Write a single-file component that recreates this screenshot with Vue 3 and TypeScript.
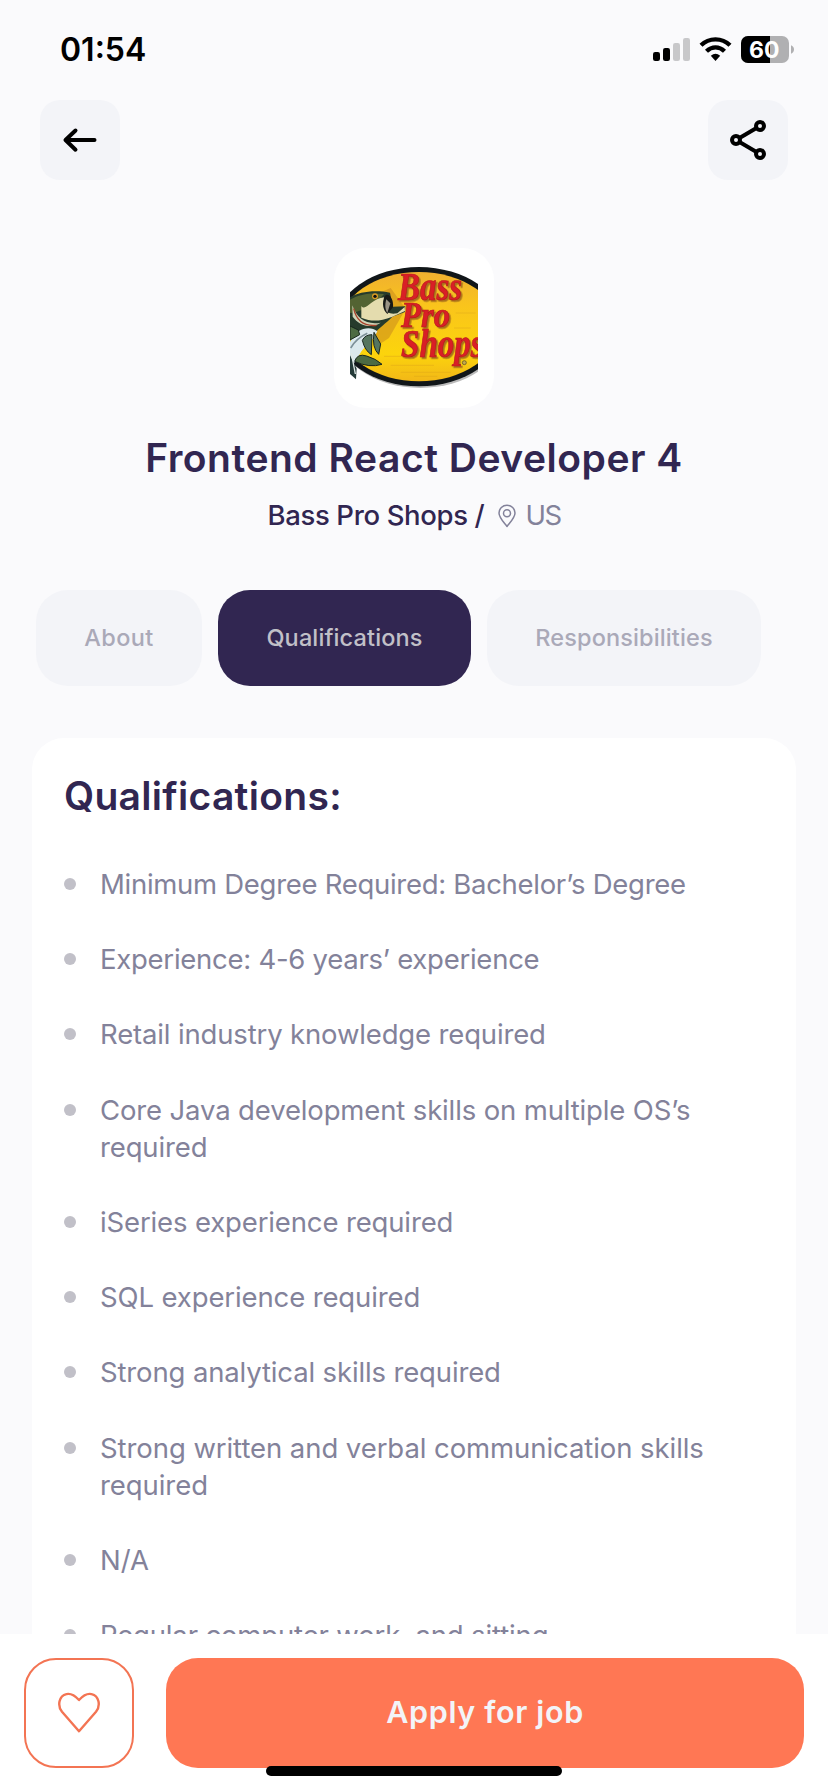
<script setup lang="ts">
interface Tab {
  label: string
  key: string
}

interface Qualification {
  text: string
  tracking: number
}

const active = 'qualifications'

const tabs: Tab[] = [
  { label: 'About', key: 'about' },
  { label: 'Qualifications', key: 'qualifications' },
  { label: 'Responsibilities', key: 'responsibilities' },
]

const qualifications: Qualification[] = [
  { text: 'Minimum Degree Required: Bachelor’s Degree', tracking: -0.29 },
  { text: 'Experience: 4-6 years’ experience', tracking: -0.26 },
  { text: 'Retail industry knowledge required', tracking: -0.15 },
  { text: 'Core Java development skills on multiple OS’s required', tracking: -0.14 },
  { text: 'iSeries experience required', tracking: -0.14 },
  { text: 'SQL experience required', tracking: -0.12 },
  { text: 'Strong analytical skills required', tracking: -0.14 },
  { text: 'Strong written and verbal communication skills required', tracking: -0.07 },
  { text: 'N/A', tracking: 0 },
  { text: 'Regular computer work, and sitting', tracking: -0.15 },
]
</script>

<template>
  <div class="screen">
    <div class="status">
      <span class="time">01:54</span>
      <svg class="indicators" width="144" height="30" viewBox="0 0 144 30">
        <rect x="0" y="17" width="7" height="9" rx="2.2" />
        <rect x="10" y="13" width="7" height="13" rx="2.2" />
        <rect x="20" y="8" width="7" height="18" rx="2.2" fill="#c8c8ca" />
        <rect x="30" y="3" width="7" height="23" rx="2.2" fill="#c8c8ca" />
        <g fill="none" stroke="#000" stroke-width="4.3">
          <path d="M48 10.3 C56 2.3 69 2.3 77 10.3" />
          <path d="M53.5 16.2 C58.8 11 66.2 11 71.5 16.2" />
        </g>
        <path d="M57.8 20.8 Q62.5 16.8 67.2 20.8 L62.5 26 Z" />
        <rect x="88" y="1" width="48" height="27" rx="7" fill="#b0b0b2" />
        <path d="M95 1 H117 V28 H95 A7 7 0 0 1 88 21 V8 A7 7 0 0 1 95 1 Z" />
        <path d="M138 10.3 C142 11.5 142 17.5 138 18.7 Z" fill="#b0b0b2" />
        <text x="111.3" y="23" class="battery">60</text>
      </svg>
    </div>

    <header class="nav">
      <button class="square" aria-label="Back">
        <svg width="80" height="80" viewBox="0 0 80 80" fill="none" stroke="#000" stroke-width="4" stroke-linecap="round" stroke-linejoin="round">
          <path d="M35.5 30.5 L25.5 40 L35.5 49.7 M26 40 H54.5" />
        </svg>
      </button>
      <button class="square" aria-label="Share">
        <svg width="80" height="80" viewBox="0 0 80 80" fill="none" stroke="#000" stroke-width="4">
          <circle cx="28" cy="40" r="4" />
          <circle cx="52" cy="26" r="4" />
          <circle cx="52" cy="54" r="4" />
          <path d="M31.5 38 L48.5 28 M31.5 42 L48.5 52" />
        </svg>
      </button>
    </header>

    <main class="content">
      <div class="logo">
        <svg width="128" height="128" viewBox="78 78 384 384">
          <defs>
            <linearGradient id="gold" x1="0" y1="0" x2="0" y2="1">
              <stop offset="0" stop-color="#f0b030" />
              <stop offset="0.3" stop-color="#f9c41c" />
              <stop offset="0.75" stop-color="#fcd40c" />
              <stop offset="1" stop-color="#f2b718" />
            </linearGradient>
          </defs>
          <ellipse cx="289" cy="271" rx="253" ry="179" fill="#bbb" />
          <ellipse cx="285" cy="266" rx="253" ry="179" fill="#111619" />
          <ellipse cx="285" cy="266" rx="238" ry="164" fill="url(#gold)" />
          <path d="M200 150 L245 212 L195 300 L150 330 L130 180 Z" fill="#c98a1d" opacity=".55" />
          <g fill="none" stroke="#dfa51a" stroke-width="2" opacity=".7">
            <path d="M180 355 H240 M200 382 H330 M230 403 H380 M390 270 H440 M395 225 H455 M270 415 H340" />
          </g>
          <!-- head -->
          <path d="M78 240 V178 C105 162 150 155 198 164 L206 206 L244 205 L243 222 L205 236 C186 256 164 270 150 288 L78 300 Z" fill="#263b2c" />
          <path d="M78 185 C110 166 145 164 180 168 L150 200 C120 210 100 225 78 225 Z" fill="#536332" />
          <path d="M112 204 C126 222 140 182 181 178 C176 210 180 232 220 226 L242 207 L243 219 L205 236 C165 250 145 252 112 239 Z" fill="#e4dcae" />
          <path d="M181 176 C191 160 210 180 207 208 L190 228 C176 215 174 195 181 176 Z" fill="#171a17" />
          <path d="M187 184 C181 205 185 218 190 225 L199 196 Z" fill="#9a9485" />
          <path d="M85 202 C98 242 128 262 170 254 C142 273 106 264 86 236 Z" fill="#cfd4b8" />
          <path d="M89 212 C98 250 122 266 158 262" fill="none" stroke="#a8442c" stroke-width="4" />
          <!-- belly, fins and tail -->
          <path d="M78 312 C96 270 138 262 160 280 C150 308 118 325 106 351 L92 372 L78 400 Z" fill="#dbe9ed" />
          <path d="M80 330 C92 310 108 296 130 286" fill="none" stroke="#7d9198" stroke-width="5" />
          <path d="M115 307 Q123 290 144 290 L142 350 Q122 337 115 307 Z M150 283 L170 318 L164 349 Q143 329 150 283 Z" fill="#55755f" stroke="#1a2921" stroke-width="3" />
          <path d="M92 370 Q100 345 128 354 Q156 362 174 379 Q136 391 92 370 Z M78 264 L103 276 L107 290 L78 306 Z" fill="#4d6b43" stroke="#18271d" stroke-width="3" />
          <path d="M78 352 L98 392 L96 424 L78 408 Z" fill="#253b39" />
          <path d="M82 345 L94 408" stroke="#e0e9e6" stroke-width="4" />
          <circle cx="153" cy="175" r="9" fill="#d99b22" />
          <circle cx="153" cy="175" r="5" fill="#111" />
          <g class="wordmark">
            <text x="222" y="185" font-size="117" textLength="192" lengthAdjust="spacingAndGlyphs">Bass</text>
            <text x="231" y="267" font-size="109" textLength="147" lengthAdjust="spacingAndGlyphs">Pro</text>
            <text x="231" y="356" font-size="122" textLength="248" lengthAdjust="spacingAndGlyphs">Shops</text>
          </g>
          <circle cx="421" cy="374" r="6" fill="#c6a94c" stroke="#4d4526" stroke-width="2" />
        </svg>
      </div>

      <h1 class="title">Frontend React Developer 4</h1>
      <div class="company">
        <span class="name">Bass Pro Shops /</span>
        <svg class="pin" width="20" height="24" viewBox="0 0 20 24" fill="none" stroke="#83829a" stroke-width="1.5">
          <path d="M10 22.5 C7.2 18.7 2 13.7 2 9 A8 7.8 0 0 1 18 9 C18 13.7 12.8 18.7 10 22.5 Z" stroke-linejoin="round" />
          <circle cx="10" cy="9.2" r="3.5" />
        </svg>
        <span class="place">US</span>
      </div>

      <nav class="tabs">
        <button v-for="tab in tabs" :key="tab.key" class="tab" :class="[tab.key, { active: tab.key === active }]">
          <span>{{ tab.label }}</span>
        </button>
      </nav>

      <section class="card">
        <h2 class="heading">Qualifications:</h2>
        <ul class="list">
          <li v-for="item in qualifications" :key="item.text" class="item">
            <i class="dot"></i>
            <span class="text"><span :style="{ letterSpacing: item.tracking + 'px' }">{{ item.text }}</span></span>
          </li>
        </ul>
      </section>
    </main>

    <footer class="footer">
      <button class="like" aria-label="Save job">
        <svg width="44" height="42" viewBox="0 0 44 42" fill="none" stroke="#f37453" stroke-width="2.4" stroke-linejoin="round">
          <path d="M22 39.3 L5 19.8 C0.2 13.8 1.8 3.8 9.5 2.1 C14.4 1 18.5 4.2 22 8 C25.5 4.2 29.6 1 34.5 2.1 C42.2 3.8 43.8 13.8 39 19.8 Z" />
        </svg>
      </button>
      <button class="apply"><span>Apply for job</span></button>
      <div class="home"></div>
    </footer>
  </div>
</template>

<style>
body {
  margin: 0;
  background: #fafafc;
}
</style>

<style scoped>
.screen {
  width: 828px;
  height: 1792px;
  display: flex;
  flex-direction: column;
  overflow: hidden;
  background: #fafafc;
  font-family: Inter, "Liberation Sans", sans-serif;
  color: #312651;
}

button {
  border: 0;
  padding: 0;
  margin: 0;
  font: inherit;
}

.status {
  display: flex;
  justify-content: space-between;
  height: 65px;
  padding: 35px 34px 0 60px;
  flex: none;
}

.time {
  font-size: 32px;
  line-height: 30px;
  font-weight: 600;
  color: #000;
}

.indicators {
  display: block;
  margin-right: -3px;
}

.battery {
  font: 700 23px Inter, sans-serif;
  fill: #fff;
  text-anchor: middle;
}

.nav {
  display: flex;
  justify-content: space-between;
  padding: 0 40px;
  flex: none;
}

.square {
  width: 80px;
  height: 80px;
  border-radius: 20px;
  background: #f3f4f8;
}

.square svg {
  display: block;
}

.content {
  flex: 1;
  min-height: 0;
  overflow: hidden;
  display: flex;
  flex-direction: column;
  padding-top: 68px;
}

.logo {
  width: 160px;
  height: 160px;
  box-sizing: border-box;
  padding: 16px;
  border-radius: 32px;
  background: #fff;
  align-self: center;
  flex: none;
}

.logo svg {
  display: block;
}

.wordmark {
  font-family: "Liberation Serif", serif;
  font-weight: 700;
  font-style: italic;
  fill: #d91f26;
  stroke: #b5181e;
  stroke-width: 2;
  filter: drop-shadow(5px 5px 0 #a8701a);
}

.title {
  margin: 24px 0 0;
  font-size: 39px;
  line-height: 52px;
  font-weight: 600;
  letter-spacing: 0.52px;
  text-align: center;
  white-space: nowrap;
}

.company {
  display: flex;
  justify-content: center;
  align-items: center;
  height: 36px;
  margin-top: 13px;
  font-size: 27.5px;
  flex: none;
}

.name {
  font-weight: 500;
  letter-spacing: -0.35px;
}

.pin {
  margin: 2px 8px 0 13px;
}

.place {
  color: #83829a;
  letter-spacing: -1.5px;
}

.tabs {
  display: flex;
  gap: 16px;
  padding-left: 36px;
  margin-top: 57px;
  flex: none;
}

.tab {
  height: 96px;
  padding-bottom: 2px;
  border-radius: 32px;
  background: #f3f4f8;
  color: #aaa9b8;
  font-size: 23.5px;
  font-weight: 500;
  letter-spacing: 0.13px;
}

.about {
  width: 166px;
  letter-spacing: 0.4px;
}

.qualifications {
  width: 253px;
}

.responsibilities {
  width: 274px;
}

.tab.active {
  background: #312651;
  color: #c1c0c8;
}

.card {
  margin: 52px 32px 0;
  padding: 32px 32px 0;
  border-radius: 32px 32px 0 0;
  background: #fff;
  flex: 1 0 auto;
}

.heading {
  margin: 0;
  font-size: 39px;
  line-height: 52px;
  font-weight: 600;
  letter-spacing: 0.3px;
}

.list {
  margin: 43px 0 0;
  padding: 0;
  list-style: none;
}

.item {
  display: flex;
  margin-bottom: 37px;
  font-size: 27.5px;
  line-height: 37.2px;
  color: #83829a;
}

.dot {
  flex: none;
  width: 12px;
  height: 12px;
  margin: 13px 24px 0 0;
  border-radius: 50%;
  background: #c1c0c8;
}

.text {
  width: 640px;
  padding-top: 1px;
}

.footer {
  position: relative;
  display: flex;
  gap: 32px;
  height: 134px;
  padding: 24px 24px 0;
  flex: none;
  background: #fff;
}

.like {
  box-sizing: border-box;
  width: 110px;
  height: 110px;
  border: 2px solid #f37453;
  border-radius: 32px;
  background: #fff;
  display: flex;
  align-items: center;
  justify-content: center;
}

.apply {
  flex: 1;
  height: 110px;
  padding-bottom: 4px;
  border-radius: 32px;
  background: #ff7754;
  color: #f3f4f8;
  font-size: 30.5px;
  font-weight: 600;
  letter-spacing: 0.65px;
}

.home {
  position: absolute;
  left: 266px;
  top: 132px;
  width: 296px;
  height: 10px;
  border-radius: 5px;
  background: #000;
}
</style>
